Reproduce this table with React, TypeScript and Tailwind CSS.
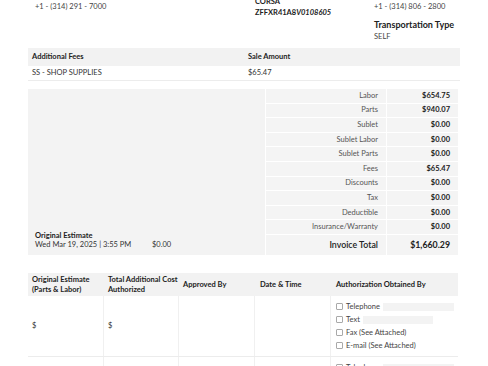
import React from 'react';

const summaryRows: [string, string][] = [
  ['Labor', '$654.75'],
  ['Parts', '$940.07'],
  ['Sublet', '$0.00'],
  ['Sublet Labor', '$0.00'],
  ['Sublet Parts', '$0.00'],
  ['Fees', '$65.47'],
  ['Discounts', '$0.00'],
  ['Tax', '$0.00'],
  ['Deductible', '$0.00'],
  ['Insurance/Warranty', '$0.00'],
];

const Check = ({ label, field }: { label: string; field?: number }) => (
  <div className="flex items-center h-[13px]">
    <span className="w-[7px] h-[7px] border border-[#a9a9a9] rounded-[1px] bg-white" />
    <span className="ml-[3px] text-[#444]">{label}</span>
    {field ? <span className="ml-[3px] h-[8px] bg-[#f3f3f3]" style={{ width: field }} /> : null}
  </div>
);

const AuthRow = ({ amounts = true }: { amounts?: boolean }) => (
  <div className="flex h-[61px] border-b border-[#ececec]">
    <div className="w-[76px] flex items-center pl-[4px] border-r border-[#f0f0f0] text-[#333]">{amounts && '$'}</div>
    <div className="w-[75px] flex items-center pl-[4px] border-r border-[#f0f0f0] text-[#333]">{amounts && '$'}</div>
    <div className="w-[76px] border-r border-[#f0f0f0]" />
    <div className="w-[76px] border-r border-[#f0f0f0]" />
    <div className="flex-1 pl-[5px] pt-[4px]">
      <Check label="Telephone" field={71} />
      <Check label="Text" field={70} />
      <Check label="Fax (See Attached)" />
      <Check label="E-mail (See Attached)" />
    </div>
  </div>
);

export default function App() {
  return (
    <div className="w-[488px] h-[366px] overflow-hidden bg-white text-[7.5px] leading-[10px] text-[#333] font-['Lato',sans-serif]">
      <div className="pl-[28px] w-[460px]">
        {/* vehicle / contact strip */}
        <div className="flex mt-[-4px]">
          <div className="w-[227px] pl-[7px] pt-[6px] text-[#444]">+1 - (314) 291 - 7000</div>
          <div className="w-[119px] font-bold text-[#222] leading-[11px]">
            <div>CORSA</div>
            <div>
              ZFFXR41A8<span className="italic">V0108605</span>
            </div>
          </div>
          <div className="flex-1 pt-[6px]">
            <div className="text-[#444]">+1 - (314) 806 - 2800</div>
            <div className="mt-[7px] text-[9px] leading-[12px] font-bold text-[#222]">Transportation Type</div>
            <div className="text-[#444] leading-[11px]">SELF</div>
          </div>
        </div>

        {/* additional fees */}
        <div className="mt-[6px]">
          <div className="flex items-center h-[18px] bg-[#f2f2f2] font-bold text-[#222]">
            <div className="w-[220px] pl-[4px]">Additional Fees</div>
            <div>Sale Amount</div>
          </div>
          <div className="flex items-center h-[15px] border-b border-[#ececec]">
            <div className="w-[220px] pl-[4px]">SS - SHOP SUPPLIES</div>
            <div>$65.47</div>
          </div>
        </div>

        {/* totals */}
        <div className="flex mt-[8px] w-[430px] h-[166px]">
          <div className="w-[237px] bg-[#f3f3f3] flex flex-col justify-end pl-[7px] pb-[6px]">
            <div className="font-bold text-[#222] leading-[9px]">Original Estimate</div>
            <div className="flex leading-[9px] text-[#333]">
              <span className="w-[117px]">Wed Mar 19, 2025 | 3:55 PM</span>
              <span>$0.00</span>
            </div>
          </div>
          <div className="flex-1 ml-[1px] flex flex-col">
            {summaryRows.map(([label, value]) => (
              <div key={label} className="flex h-[14.6px] border-b border-white">
                <div className="w-[120px] bg-[#f4f4f4] flex items-center justify-end pr-[8px] text-[#555]">{label}</div>
                <div className="flex-1 ml-[1px] bg-[#f4f4f4] flex items-center justify-end pr-[8px] font-bold text-[#222]">{value}</div>
              </div>
            ))}
            <div className="flex flex-1">
              <div className="w-[120px] bg-[#f4f4f4] flex items-center justify-end pr-[8px] text-[8.8px] font-semibold text-[#222]">Invoice Total</div>
              <div className="flex-1 ml-[1px] bg-[#f4f4f4] flex items-center justify-end pr-[8px] text-[8.8px] font-bold text-[#222]">$1,660.29</div>
            </div>
          </div>
        </div>

        {/* authorization */}
        <div className="mt-[18px] w-[430px]">
          <div className="flex items-center h-[23px] bg-[#f2f2f2] font-bold text-[#222]">
            <div className="w-[76px] pl-[4px]">Original Estimate (Parts &amp; Labor)</div>
            <div className="w-[75px] pl-[4px]">Total Additional Cost Authorized</div>
            <div className="w-[76px] pl-[4px]">Approved By</div>
            <div className="w-[76px] pl-[5px]">Date &amp; Time</div>
            <div className="flex-1 pl-[5px]">Authorization Obtained By</div>
          </div>
          <AuthRow />
          <AuthRow amounts={false} />
        </div>
      </div>
    </div>
  );
}
